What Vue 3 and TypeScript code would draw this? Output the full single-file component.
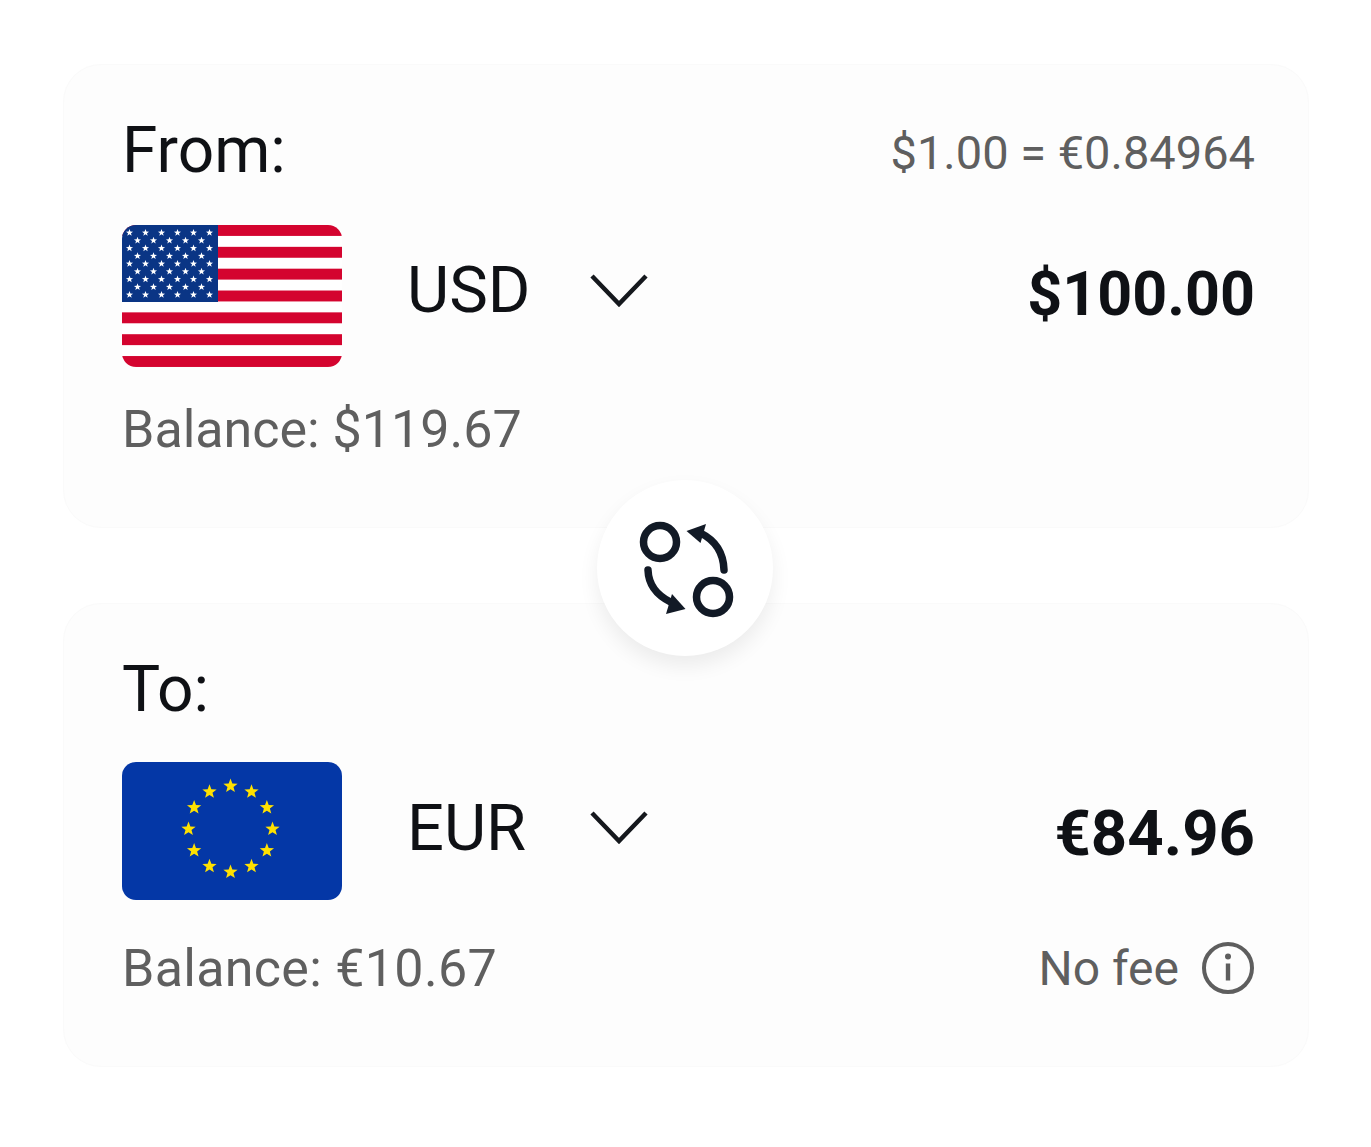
<script setup lang="ts">
import { computed } from 'vue'

const starPath = (cx: number, cy: number, r: number) => {
  const pts: string[] = []
  for (let i = 0; i < 10; i++) {
    const rad = i % 2 === 0 ? r : r * 0.42
    const a = (Math.PI / 5) * i - Math.PI / 2
    pts.push(`${(cx + rad * Math.cos(a)).toFixed(2)},${(cy + rad * Math.sin(a)).toFixed(2)}`)
  }
  return pts.join(' ')
}

// 50 stars, alternating rows of 6 and 5
const usStars = computed(() => {
  const out: string[] = []
  for (let row = 0; row < 9; row++) {
    const even = row % 2 === 0
    const n = even ? 6 : 5
    for (let i = 0; i < n; i++) {
      const x = (even ? 7.5 : 15.5) + i * 16
      out.push(starPath(x, 7.8 + row * 7.75, 3.7))
    }
  }
  return out
})

const euStars = computed(() => {
  const out: string[] = []
  for (let i = 0; i < 12; i++) {
    const a = (Math.PI / 6) * i
    out.push(starPath(108.5 + 42 * Math.sin(a), 67 - 43 * Math.cos(a), 7.5))
  }
  return out
})

const stripes = [0, 2, 4, 6, 8, 10, 12]
</script>

<template>
  <main class="page">
    <section class="card">
      <div class="row head">
        <span class="label">From:</span>
        <span class="muted rate">$1.00 = €0.84964</span>
      </div>
      <div class="row currency usd">
        <div class="picker">
          <svg class="flag" viewBox="0 0 220 142">
            <defs>
              <clipPath id="usClip"><rect width="220" height="142" rx="14" /></clipPath>
            </defs>
            <g clip-path="url(#usClip)">
              <rect width="220" height="142" fill="#fff" />
              <rect v-for="s in stripes" :key="s" x="0" :y="s * 10.92" width="220" height="10.92" fill="#d4042f" />
              <rect width="96" height="77" fill="#0a3585" />
              <polygon v-for="(p, i) in usStars" :key="i" :points="p" fill="#fff" />
            </g>
          </svg>
          <span class="code">USD</span>
          <svg class="chev" viewBox="0 0 58 34" fill="none">
            <path d="M2 3 L29 31 L56 3" stroke="#15181d" stroke-width="4.5" />
          </svg>
        </div>
        <span class="amount">$100.00</span>
      </div>
      <div class="row foot">
        <span class="muted balance">Balance: $119.67</span>
      </div>
    </section>

    <section class="card">
      <div class="row head">
        <span class="label">To:</span>
      </div>
      <div class="row currency eur">
        <div class="picker">
          <svg class="flag" viewBox="0 0 220 138">
            <rect width="220" height="138" rx="14" fill="#0437a6" />
            <polygon v-for="(p, i) in euStars" :key="i" :points="p" fill="#ffe100" />
          </svg>
          <span class="code">EUR</span>
          <svg class="chev" viewBox="0 0 58 34" fill="none">
            <path d="M2 3 L29 31 L56 3" stroke="#15181d" stroke-width="4.5" />
          </svg>
        </div>
        <span class="amount">€84.96</span>
      </div>
      <div class="row foot">
        <span class="muted balance wide">Balance: €10.67</span>
        <span class="fee">
          <span class="muted fee-text">No fee</span>
          <svg class="info" viewBox="0 0 52 52" fill="none">
            <circle cx="26" cy="26" r="24" stroke="#5e5e5e" stroke-width="4" />
            <circle cx="26" cy="14.5" r="3" fill="#5e5e5e" />
            <rect x="23.8" y="21.5" width="4.4" height="17" fill="#5e5e5e" />
          </svg>
        </span>
      </div>
    </section>

    <div class="swap">
      <svg viewBox="0 0 176 176" width="176" height="176" fill="none">
        <circle cx="63" cy="62" r="16.5" stroke="#121a26" stroke-width="7.5" />
        <circle cx="116" cy="117" r="16.5" stroke="#121a26" stroke-width="7.5" />
        <path d="M127 90 C126.5 72 117.5 60 103.5 53" stroke="#121a26" stroke-width="7.5" stroke-linecap="round" />
        <polygon points="89.5,51 109,44 103.5,63" fill="#121a26" />
        <path d="M51 90 C51.5 105 59.5 115 73.5 122" stroke="#121a26" stroke-width="7.5" stroke-linecap="round" />
        <polygon points="88.5,129 69,134 75,114" fill="#121a26" />
      </svg>
    </div>
  </main>
</template>

<style>
html, body {
  margin: 0;
  background: #fff;
}
</style>

<style scoped>
.page {
  position: relative;
  width: 1371px;
  height: 1147px;
  box-sizing: border-box;
  padding: 64px 62px 0 63px;
  display: flex;
  flex-direction: column;
  gap: 75px;
  font-family: Roboto, "Liberation Sans", sans-serif;
  color: #0f1115;
}
.card {
  height: 464px;
  box-sizing: border-box;
  padding: 50px 53px 0 58px;
  background: #fdfdfd;
  border: 1px solid #fafafa;
  border-radius: 38px;
}
.row {
  display: flex;
  align-items: center;
  justify-content: space-between;
}
.head {
  height: 72px;
}
.currency {
  margin-top: 38px;
}
.foot {
  height: 60px;
  margin-top: 32px;
}
.eur {
  margin-top: 36px;
}
.eur + .foot {
  margin-top: 38px;
}
.label {
  font-size: 64px;
  line-height: 72px;
}
.muted {
  color: #5f5f5f;
}
.rate {
  font-size: 47px;
  margin-top: 2px;
}
.fee-text {
  font-size: 48px;
}
.balance {
  font-size: 52px;
}
.wide {
  letter-spacing: 0.3px;
}
.picker {
  display: flex;
  align-items: center;
}
.flag {
  width: 220px;
  display: block;
}
.code {
  font-size: 65px;
  width: 183px;
  margin-left: 65px;
  margin-top: -12px;
}
.eur .code {
  margin-top: -6px;
}
.chev {
  width: 58px;
  height: 34px;
  margin-top: -12px;
}
.eur .chev {
  margin-top: -8px;
}
.amount {
  font-size: 61px;
  font-weight: 700;
  margin-top: -5px;
}
.eur .amount {
  font-size: 63.5px;
  margin-top: 4px;
}
.fee {
  display: flex;
  align-items: center;
  gap: 23px;
  margin-right: 1px;
}
.info {
  width: 52px;
  height: 52px;
}
.swap {
  position: absolute;
  left: 597px;
  top: 480px;
  width: 176px;
  height: 176px;
  border-radius: 50%;
  background: #fff;
  box-shadow: 0 10px 20px rgba(0, 0, 0, 0.07);
}
.swap svg {
  display: block;
}
</style>
